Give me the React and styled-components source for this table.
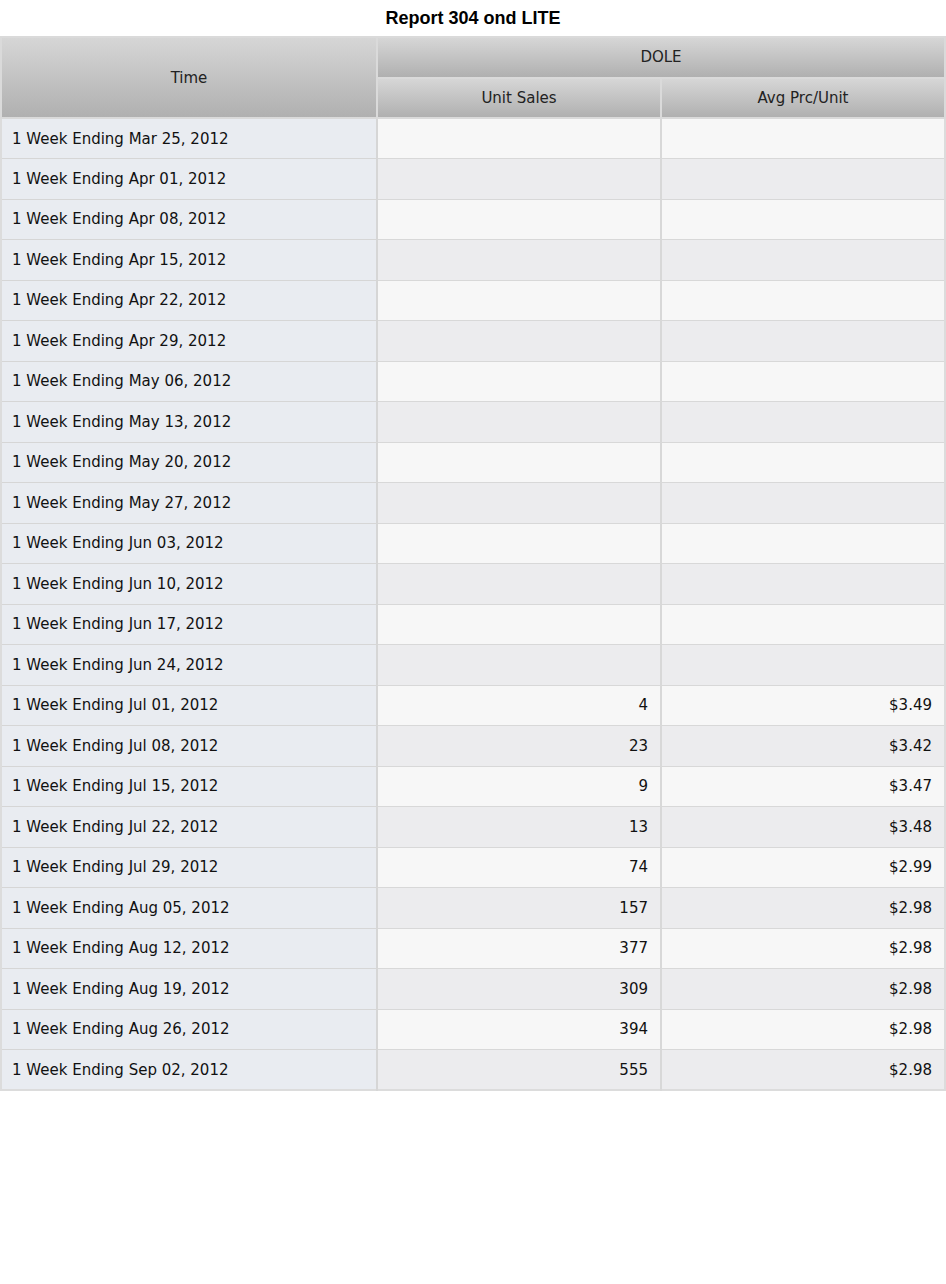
import styled, { createGlobalStyle } from 'styled-components';

const GlobalStyle = createGlobalStyle`
  body {
    margin: 0;
    background: #ffffff;
  }
`;

const weeks = [
  ['Mar 25, 2012', '', ''],
  ['Apr 01, 2012', '', ''],
  ['Apr 08, 2012', '', ''],
  ['Apr 15, 2012', '', ''],
  ['Apr 22, 2012', '', ''],
  ['Apr 29, 2012', '', ''],
  ['May 06, 2012', '', ''],
  ['May 13, 2012', '', ''],
  ['May 20, 2012', '', ''],
  ['May 27, 2012', '', ''],
  ['Jun 03, 2012', '', ''],
  ['Jun 10, 2012', '', ''],
  ['Jun 17, 2012', '', ''],
  ['Jun 24, 2012', '', ''],
  ['Jul 01, 2012', '4', '$3.49'],
  ['Jul 08, 2012', '23', '$3.42'],
  ['Jul 15, 2012', '9', '$3.47'],
  ['Jul 22, 2012', '13', '$3.48'],
  ['Jul 29, 2012', '74', '$2.99'],
  ['Aug 05, 2012', '157', '$2.98'],
  ['Aug 12, 2012', '377', '$2.98'],
  ['Aug 19, 2012', '309', '$2.98'],
  ['Aug 26, 2012', '394', '$2.98'],
  ['Sep 02, 2012', '555', '$2.98'],
];

export default function App() {
  return (
    <>
      <GlobalStyle />
      <Page>
        <Title>Report 304 ond LITE</Title>
        <Report>
          <colgroup>
            <col style={{ width: 376 }} />
            <col style={{ width: 284 }} />
            <col />
          </colgroup>
          <thead>
            <HeadRow>
              <HeadCell rowSpan={2}>Time</HeadCell>
              <HeadCell colSpan={2}>DOLE</HeadCell>
            </HeadRow>
            <HeadRow>
              <HeadCell>Unit Sales</HeadCell>
              <HeadCell>Avg Prc/Unit</HeadCell>
            </HeadRow>
          </thead>
          <tbody>
            {weeks.map(([date, units, price], i) => (
              <Row key={date}>
                <TimeCell>1 Week Ending {date}</TimeCell>
                <ValueCell odd={i % 2 === 1}>{units}</ValueCell>
                <ValueCell odd={i % 2 === 1}>{price}</ValueCell>
              </Row>
            ))}
          </tbody>
        </Report>
      </Page>
    </>
  );
}

const Page = styled.div`
  width: 946px;
`;

const Title = styled.h1`
  margin: 0;
  height: 36px;
  line-height: 36px;
  text-align: center;
  font-family: "Liberation Sans", Arial, sans-serif;
  font-size: 18px;
  font-weight: 700;
  color: #000000;
`;

const Report = styled.table`
  width: 946px;
  table-layout: fixed;
  border-collapse: collapse;
  border: 2px solid #dcdcdc;
  font-family: "DejaVu Sans", Verdana, sans-serif;
  font-size: 15px;
  color: #111111;
`;

const HeadRow = styled.tr`
  height: 40.5px;
`;

const HeadCell = styled.th`
  padding: 0 10px;
  line-height: 18px;
  font-weight: 400;
  text-align: center;
  color: #222222;
  border: 2px solid #dadada;
  background: linear-gradient(#d6d6d6, #b0b0b0);
`;

const Row = styled.tr`
  height: 40.5px;
`;

const TimeCell = styled.td`
  padding: 0 10px;
  line-height: 18px;
  background: #e9ecf1;
  border: 1px solid #d6d6d6;
  border-right-width: 2px;
  white-space: nowrap;
`;

const ValueCell = styled.td`
  padding: 0 12px;
  line-height: 18px;
  text-align: right;
  background: ${({ odd }) => (odd ? '#ececee' : '#f7f7f7')};
  border: 1px solid #d8d8d8;
  border-left-width: 2px;
`;
